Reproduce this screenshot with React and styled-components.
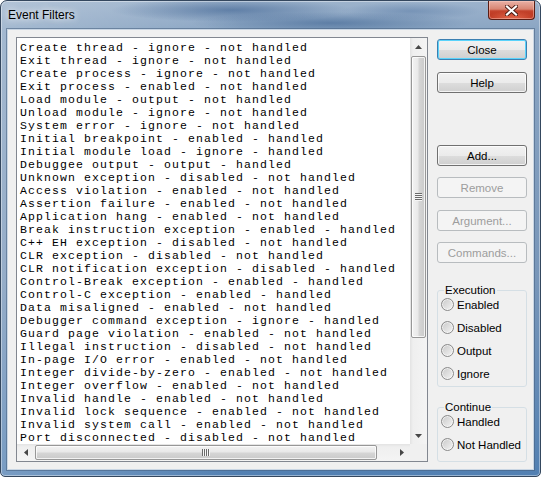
import React from "react";
import styled, { createGlobalStyle } from "styled-components";

const GlobalStyle = createGlobalStyle`
  html, body {
    margin: 0;
    padding: 0;
    background: #ffffff;
  }
  body {
    font-family: "Liberation Sans", Arial, sans-serif;
  }
`;

const events = [
  "Create thread - ignore - not handled",
  "Exit thread - ignore - not handled",
  "Create process - ignore - not handled",
  "Exit process - enabled - not handled",
  "Load module - output - not handled",
  "Unload module - ignore - not handled",
  "System error - ignore - not handled",
  "Initial breakpoint - enabled - handled",
  "Initial module load - ignore - handled",
  "Debuggee output - output - handled",
  "Unknown exception - disabled - not handled",
  "Access violation - enabled - not handled",
  "Assertion failure - enabled - not handled",
  "Application hang - enabled - not handled",
  "Break instruction exception - enabled - handled",
  "C++ EH exception - disabled - not handled",
  "CLR exception - disabled - not handled",
  "CLR notification exception - disabled - handled",
  "Control-Break exception - enabled - handled",
  "Control-C exception - enabled - handled",
  "Data misaligned - enabled - not handled",
  "Debugger command exception - ignore - handled",
  "Guard page violation - enabled - not handled",
  "Illegal instruction - disabled - not handled",
  "In-page I/O error - enabled - not handled",
  "Integer divide-by-zero - enabled - not handled",
  "Integer overflow - enabled - not handled",
  "Invalid handle - enabled - not handled",
  "Invalid lock sequence - enabled - not handled",
  "Invalid system call - enabled - not handled",
  "Port disconnected - disabled - not handled",
];

const Window = styled.div`
  width: 541px;
  height: 477px;
  box-sizing: border-box;
  border: 1px solid #34475e;
  border-radius: 7px 7px 5px 5px;
  overflow: hidden;
  display: flex;
  flex-direction: column;
  box-shadow: inset 0 0 0 1px rgba(255, 255, 255, 0.4);
  background:
    radial-gradient(ellipse 120px 12px at 230px 9px, rgba(50, 88, 138, 0.55), rgba(50, 88, 138, 0)),
    radial-gradient(ellipse 140px 11px at 330px 22px, rgba(45, 85, 135, 0.5), rgba(45, 85, 135, 0)),
    radial-gradient(ellipse 70px 9px at 410px 10px, rgba(60, 98, 148, 0.35), rgba(60, 98, 148, 0)),
    linear-gradient(to right, rgba(255, 255, 255, 0.22), rgba(255, 255, 255, 0) 45%),
    linear-gradient(to bottom, #9db3cc 0px, #8aa5c3 30px, #7896b9 280px, #5280b2 477px);
`;

const TitleBar = styled.div`
  height: 28px;
  flex: 0 0 28px;
  display: flex;
  justify-content: space-between;
  align-items: flex-start;
`;

const Title = styled.div`
  padding-left: 7px;
  line-height: 28px;
  font-size: 12px;
  color: #000000;
  text-shadow: 0 0 6px rgba(255, 255, 255, 0.9), 0 0 10px rgba(255, 255, 255, 0.7);
`;

const CloseBox = styled.div`
  width: 47px;
  height: 19px;
  margin-right: 5px;
  box-sizing: border-box;
  border: 1px solid #5a1d14;
  border-top: none;
  border-radius: 0 0 4px 4px;
  display: flex;
  align-items: center;
  justify-content: center;
  background:
    radial-gradient(ellipse 26px 8px at 50% 100%, rgba(240, 120, 90, 0.8), rgba(240, 120, 90, 0)),
    linear-gradient(to bottom, #e9b1a6 0%, #d88573 45%, #c4432c 55%, #b8311b 100%);
  box-shadow: inset 0 0 0 1px rgba(255, 210, 200, 0.45);
`;

const Client = styled.div`
  flex: 1;
  margin: 0 6px 6px 6px;
  box-sizing: border-box;
  border: 1px solid #c9d6e4;
  box-shadow: 0 0 0 1px rgba(70, 95, 125, 0.55);
  background: #f0f0f0;
  display: flex;
  gap: 9px;
  padding: 7px 6px 6px 8px;
`;

const ListBox = styled.div`
  width: 412px;
  height: 425px;
  box-sizing: border-box;
  border: 1px solid #828790;
  display: grid;
  grid-template-columns: 393px 17px;
  grid-template-rows: 406px 17px;
  background: #ffffff;
`;

const ListContent = styled.div`
  overflow: hidden;
  padding: 3px 0 0 3px;
  font-family: "Liberation Mono", "Courier New", monospace;
  font-size: 11.5px;
  letter-spacing: 1.1px;
  line-height: 13px;
  color: #000000;
  white-space: pre;
`;

const ListItem = styled.div`
  height: 13px;
`;

const ScrollV = styled.div`
  display: flex;
  flex-direction: column;
  background: linear-gradient(to right, #e3e3e3 0px, #efefef 3px, #f4f4f4 100%);
`;

const ScrollH = styled.div`
  display: flex;
  background: linear-gradient(to bottom, #e3e3e3 0px, #efefef 3px, #f4f4f4 100%);
`;

const ArrowBox = styled.div`
  flex: 0 0 17px;
  width: 17px;
  height: 17px;
  display: flex;
  align-items: center;
  justify-content: center;
`;

const Track = styled.div`
  flex: 1;
  display: flex;
  flex-direction: ${(p) => (p.$vertical ? "column" : "row")};
`;

const Thumb = styled.div`
  box-sizing: border-box;
  border: 1px solid #979797;
  border-radius: 2px;
  display: flex;
  align-items: center;
  justify-content: center;
  box-shadow: inset 0 0 0 1px rgba(255, 255, 255, 0.75);
  ${(p) =>
    p.$vertical
      ? `
    margin: 1px 1px 0 1px;
    height: ${p.$size}px;
    background: linear-gradient(to right, #f3f3f3 0%, #e8e8e8 48%, #d6d6d6 52%, #cacaca 100%);
  `
      : `
    margin: 1px 0 1px 1px;
    width: ${p.$size}px;
    background: linear-gradient(to bottom, #f3f3f3 0%, #e8e8e8 48%, #d6d6d6 52%, #cacaca 100%);
  `}
`;

const Grip = styled.div`
  width: ${(p) => (p.$vertical ? "7px" : "8px")};
  height: ${(p) => (p.$vertical ? "8px" : "7px")};
  background: ${(p) =>
    p.$vertical
      ? "repeating-linear-gradient(to bottom, #6a6a6a 0 1px, #f6f6f6 1px 2px)"
      : "repeating-linear-gradient(to right, #6a6a6a 0 1px, #f6f6f6 1px 2px)"};
`;

const Corner = styled.div`
  background: #f0f0f0;
`;

const Side = styled.div`
  width: 90px;
  display: flex;
  flex-direction: column;
  padding-top: 2px;
`;

const Button = styled.button`
  width: 90px;
  height: 21px;
  margin: ${(p) => p.$gap || 0}px 0 0 0;
  padding: 0;
  box-sizing: border-box;
  font-family: "Liberation Sans", Arial, sans-serif;
  font-size: 11.5px;
  color: ${(p) => (p.disabled ? "#9d9d9d" : "#000000")};
  border: 1px solid ${(p) => (p.$default ? "#3c7fb1" : p.disabled ? "#b8bcbf" : "#707070")};
  border-radius: 3px;
  background: ${(p) =>
    p.disabled
      ? "#f4f4f4"
      : "linear-gradient(to bottom, #f2f2f2 0%, #ebebeb 50%, #dddddd 51%, #cfcfcf 100%)"};
  box-shadow: ${(p) =>
    p.$default
      ? "inset 0 0 0 1px #5ad3fb"
      : p.disabled
      ? "none"
      : "inset 0 0 0 1px rgba(255, 255, 255, 0.75)"};
`;

const Group = styled.fieldset`
  margin: ${(p) => p.$gap}px 0 0 0;
  padding: 0 0 ${(p) => p.$bottom}px 3px;
  border: 1px solid #d5dfe5;
  border-radius: 3px;
  min-width: 0;
  display: flex;
  flex-direction: column;
`;

const Legend = styled.legend`
  margin-left: 3px;
  padding: 0 1px;
  font-size: 11.5px;
  line-height: 5px;
  color: #000000;
`;

const RadioRow = styled.label`
  height: 23px;
  display: flex;
  align-items: center;
  gap: 3px;
  font-size: 11.5px;
  color: #000000;
`;

const RadioDot = styled.span`
  width: 13px;
  height: 13px;
  flex: 0 0 13px;
  box-sizing: border-box;
  border-radius: 50%;
  border: 1px solid #8a8a8a;
  background: linear-gradient(135deg, #c9c9c9 0%, #dcdcdc 45%, #f4f4f4 100%);
  box-shadow: inset 0 0 0 1px rgba(255, 255, 255, 0.6);
`;

const UpArrow = () => (
  <svg width="7" height="4" viewBox="0 0 7 4">
    <polygon points="0,4 3.5,0 7,4" fill="#474747" />
  </svg>
);
const DownArrow = () => (
  <svg width="7" height="4" viewBox="0 0 7 4">
    <polygon points="0,0 7,0 3.5,4" fill="#474747" />
  </svg>
);
const LeftArrow = () => (
  <svg width="4" height="7" viewBox="0 0 4 7">
    <polygon points="4,0 4,7 0,3.5" fill="#474747" />
  </svg>
);
const RightArrow = () => (
  <svg width="4" height="7" viewBox="0 0 4 7">
    <polygon points="0,0 4,3.5 0,7" fill="#474747" />
  </svg>
);

const CloseGlyph = () => (
  <svg width="13" height="11" viewBox="0 0 13 11">
    <path d="M2 1.5 L11 9.5 M11 1.5 L2 9.5" stroke="#4a1a12" strokeWidth="4" strokeLinecap="square" />
    <path d="M2 1.5 L11 9.5 M11 1.5 L2 9.5" stroke="#ffffff" strokeWidth="2.2" strokeLinecap="square" />
  </svg>
);

const Radio = ({ label }) => (
  <RadioRow>
    <RadioDot />
    {label}
  </RadioRow>
);

export default function App() {
  return (
    <>
      <GlobalStyle />
      <Window>
        <TitleBar>
          <Title>Event Filters</Title>
          <CloseBox>
            <CloseGlyph />
          </CloseBox>
        </TitleBar>
        <Client>
          <ListBox>
            <ListContent>
              {events.map((e) => (
                <ListItem key={e}>{e}</ListItem>
              ))}
            </ListContent>
            <ScrollV>
              <ArrowBox>
                <UpArrow />
              </ArrowBox>
              <Track $vertical>
                <Thumb $vertical $size={282}>
                  <Grip $vertical />
                </Thumb>
              </Track>
              <ArrowBox>
                <DownArrow />
              </ArrowBox>
            </ScrollV>
            <ScrollH>
              <ArrowBox>
                <LeftArrow />
              </ArrowBox>
              <Track>
                <Thumb $size={342}>
                  <Grip />
                </Thumb>
              </Track>
              <ArrowBox>
                <RightArrow />
              </ArrowBox>
            </ScrollH>
            <Corner />
          </ListBox>
          <Side>
            <Button $default>Close</Button>
            <Button $gap={12}>Help</Button>
            <Button $gap={52}>Add...</Button>
            <Button $gap={11} disabled>
              Remove
            </Button>
            <Button $gap={12} disabled>
              Argument...
            </Button>
            <Button $gap={11} disabled>
              Commands...
            </Button>
            <Group $gap={25} $bottom={1}>
              <Legend>Execution</Legend>
              <Radio label="Enabled" />
              <Radio label="Disabled" />
              <Radio label="Output" />
              <Radio label="Ignore" />
            </Group>
            <Group $gap={18} $bottom={5}>
              <Legend>Continue</Legend>
              <Radio label="Handled" />
              <Radio label="Not Handled" />
            </Group>
          </Side>
        </Client>
      </Window>
    </>
  );
}
